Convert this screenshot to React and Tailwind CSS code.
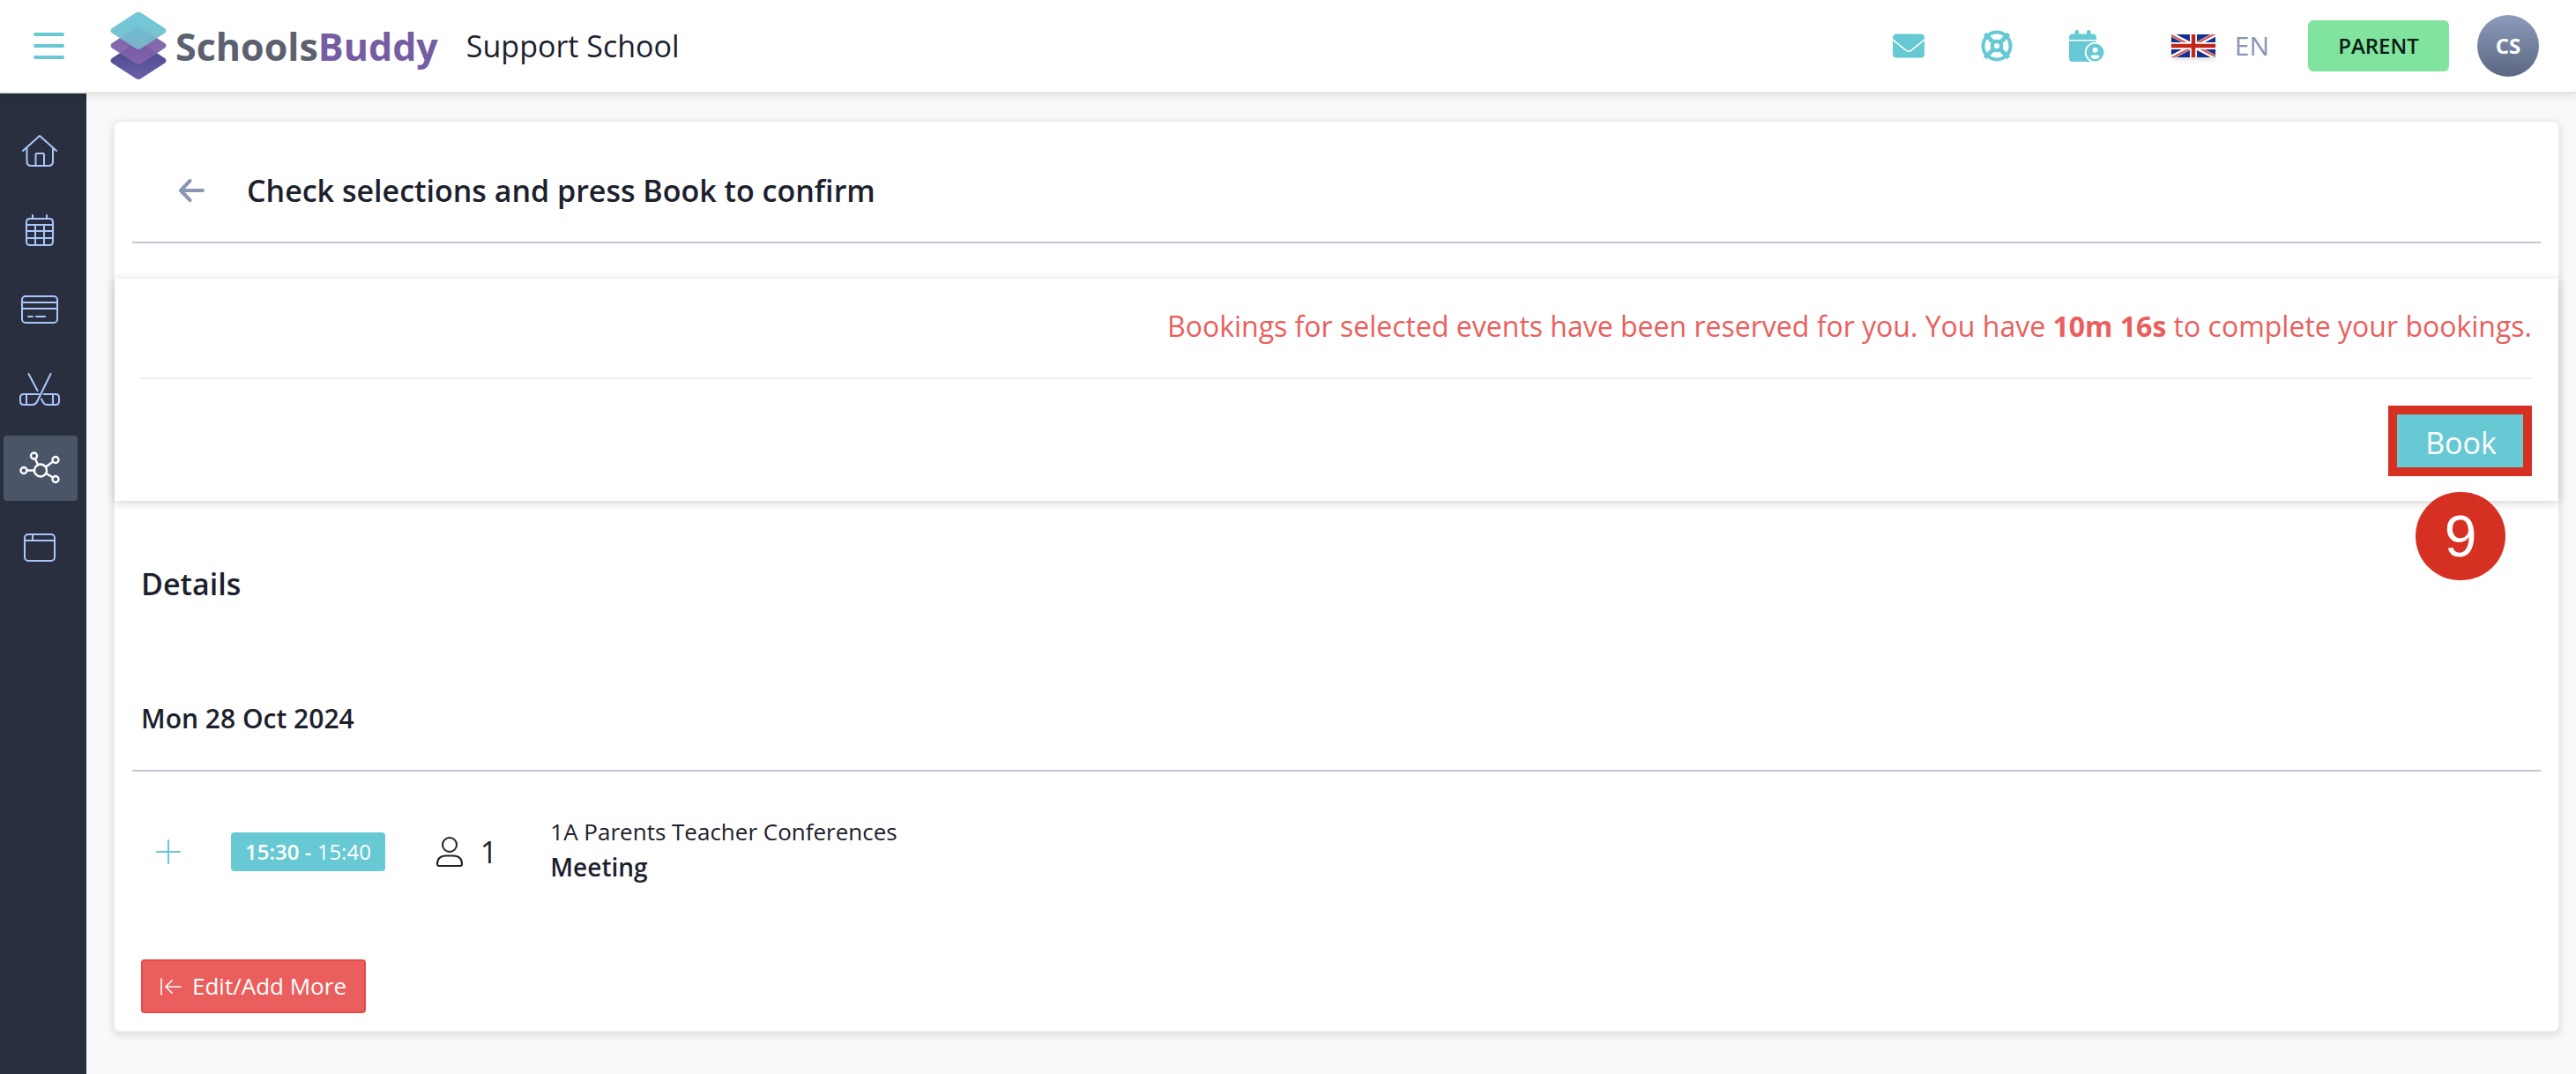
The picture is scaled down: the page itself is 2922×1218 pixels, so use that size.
import React from "react";

const rhombus = "M29 1.5Q32 -.5 35 1.5L62 19Q65 21.7 62 24.5L35 42Q32 44 29 42L2 24.5Q-1 21.7 2 19Z";

function LogoMark() {
  return (
    <svg width="64" height="78" viewBox="0 0 64 78" aria-hidden="true">
      <defs>
        <linearGradient id="lgTop" x1="0" y1="0" x2="0" y2="1">
          <stop offset="0.4" stopColor="#6bc3d3" />
          <stop offset="1" stopColor="#7fb6c6" />
        </linearGradient>
        <linearGradient id="lgMid" x1="0" y1="0" x2="0" y2="1">
          <stop offset="0.4" stopColor="#7759a2" />
          <stop offset="1" stopColor="#8668ad" />
        </linearGradient>
        <linearGradient id="lgLow" x1="0" y1="0" x2="0" y2="1">
          <stop offset="0.4" stopColor="#544e95" />
          <stop offset="1" stopColor="#6a62a8" />
        </linearGradient>
      </defs>
      <path d={rhombus} transform="translate(0 34)" fill="url(#lgLow)" />
      <path d={rhombus} transform="translate(0 17)" fill="url(#lgMid)" fillOpacity="0.92" />
      <path d={rhombus} fill="url(#lgTop)" fillOpacity="0.94" />
    </svg>
  );
}

function Line({ w, h, sw = 2, children }) {
  return (
    <svg width={w} height={h} viewBox={`0 0 ${w} ${h}`} fill="none" stroke="currentColor" strokeWidth={sw} strokeLinecap="round" strokeLinejoin="round" aria-hidden="true">
      {children}
    </svg>
  );
}

const nav = [
  { label: "Home", icon: (
    <Line w={40} h={36}><path d="M1 18L20 1L39 18M5.500 14.500V30Q5.500 35 10.500 35H30Q35 35 35 30V14.500M15.500 35V22.500Q15.500 21 17 21H23.500Q25 21 25 22.500V35" /></Line>
  ) },
  { label: "Calendar", icon: (
    <Line w={32} h={38}><path d="M5 6H27Q31 6 31 10V32Q31 36 27 36H5Q1 36 1 32V10Q1 6 5 6ZM8 2V6M24 2V6M1 13H31M1 20H31M1 28H31M11 13V36M21 13V36" /></Line>
  ) },
  { label: "Payments", icon: (
    <Line w={42} h={32}><rect x="1" y="1" width="40" height="30" rx="4" /><path d="M1 8H41M1 15H41M8 24H13M17 24H27" /></Line>
  ) },
  { label: "Activities", icon: (
    <Line w={46} h={37}><path d="M10.500 1L20.500 20M35.500 1L20 32.500Q18.300 36 15 36H5Q1 36 1 32V28Q1 24 5 24H22M8 24V36M27.500 24H41Q45 24 45 28V32Q45 36 41 36H31Q28.500 36 27 33.500L25 29.500M38 24V36" /></Line>
  ) },
  { label: "Events", active: true, icon: (
    <Line w={46} h={38} sw={2.4}><circle cx="24" cy="21.500" r="7" /><circle cx="5" cy="21.500" r="3.500" /><circle cx="16.500" cy="5" r="3.500" /><circle cx="41" cy="9.500" r="3.500" /><circle cx="41" cy="31.500" r="3.500" /><path d="M8.500 21.500H17M18 8.500L21 15M38 11.500L30 17.500M38 29.500L30.500 25" /></Line>
  ) },
  { label: "Pages", icon: (
    <Line w={36} h={32}><rect x="1" y="1" width="34" height="30" rx="4" /><path d="M1 8H35M10 1V8" /></Line>
  ) },
];

function MailIcon() {
  return (
    <svg width="36" height="28" viewBox="0 0 36 28" fill="currentColor" aria-hidden="true">
      <path d="M4.500 .5H31.500Q36 .5 36 5V6L20.500 18.500Q18 20.300 15.500 18.500L0 6V5Q0 .5 4.500 .5Z" />
      <path d="M0 8L14.500 19.700Q18 22.200 21.500 19.700L36 8V23Q36 27.500 31.500 27.500H4.500Q0 27.500 0 23Z" />
    </svg>
  );
}

function LifeRingIcon() {
  return (
    <svg width="36" height="36" viewBox="0 0 36 36" fill="none" stroke="currentColor" aria-hidden="true">
      <circle cx="18" cy="18" r="15.500" strokeWidth="4" />
      <circle cx="18" cy="18" r="5.200" strokeWidth="4.200" />
      <path d="M4.500 4.500L14 14M31.500 4.500L22 14M4.500 31.500L14 22M31.500 31.500L22 22" strokeWidth="5" />
    </svg>
  );
}

function CalendarUserIcon() {
  return (
    <svg width="40" height="36" viewBox="0 0 40 36" aria-hidden="true">
      <g fill="currentColor">
        <rect x="6.500" y="0" width="4.500" height="9" rx="2.200" />
        <rect x="20" y="0" width="4.500" height="9" rx="2.200" />
        <path d="M4 4.500H27Q31 4.500 31 8.500V11H0V8.500Q0 4.500 4 4.500Z" />
        <path d="M0 12.500H31V36H4Q0 36 0 32Z" />
      </g>
      <circle cx="29.500" cy="25.500" r="11.700" fill="#fff" />
      <circle cx="29.500" cy="25.500" r="9.900" fill="currentColor" />
      <circle cx="29.500" cy="22.800" r="3" fill="#fff" />
      <path d="M24.500 30.500Q24.500 28.500 27 28.500H32Q34.500 28.500 34.500 30.500Q33 33 29.500 33Q26 33 24.500 30.500Z" fill="#fff" />
    </svg>
  );
}

function Flag() {
  return (
    <svg width="50" height="26" viewBox="0 0 50 26" className="shadow-md" aria-hidden="true">
      <rect width="50" height="26" fill="#14308f" />
      <path d="M0 0L50 26M50 0L0 26" stroke="#fff" strokeWidth="5" />
      <path d="M0 1L23 13M50 25L27 13M50 -1L25 12M0 27L25 14" stroke="#d4554c" strokeWidth="2" />
      <path d="M25 0V26M0 13H50" stroke="#fff" strokeWidth="8" />
      <path d="M25 0V26M0 13H50" stroke="#c0281c" strokeWidth="4.500" />
    </svg>
  );
}

export default function App() {
  return (
    <div className="flex min-h-screen flex-col bg-[#f9f9f9] font-['Open_Sans',sans-serif] text-[#1c212d]">
      <header className="relative z-10 flex h-[106px] items-center justify-between border-b-2 border-[#e4e4e4] bg-white pr-[42px] pl-[38px] shadow-[0_2px_10px_rgba(0,0,0,0.12)]">
        <div className="flex items-center">
          <button aria-label="Menu" className="mr-[52px] flex w-[35px] flex-col gap-[9px]">
            <span className="h-1 rounded-full bg-[#66c9d3]" />
            <span className="h-1 rounded-full bg-[#66c9d3]" />
            <span className="h-1 rounded-full bg-[#66c9d3]" />
          </button>
          <a href="#home" className="flex items-center gap-[10px] text-[43px] leading-none font-bold text-[#5b616e]">
            <LogoMark />
            <span>Schools<span className="text-[#765da3]">Buddy</span></span>
          </a>
          <span className="ml-8 text-[34px]">Support School</span>
        </div>
        <div className="flex items-center text-[#66c9d3]">
          <button aria-label="Messages" className="mr-16"><MailIcon /></button>
          <button aria-label="Help" className="mr-16"><LifeRingIcon /></button>
          <button aria-label="My calendar" className="mr-[76px]"><CalendarUserIcon /></button>
          <button className="mr-11 flex items-center gap-[22px] text-3xl text-[#8a95b3]">
            <Flag />
            <span>EN</span>
          </button>
          <button className="mr-8 h-[58px] w-40 rounded-md bg-[#80e49e] text-2xl font-semibold text-[#0e1b16]">PARENT</button>
          <button className="h-[70px] w-[70px] rounded-full bg-linear-to-b from-[#8c9cbb] to-[#5c6781] text-2xl font-bold text-white">CS</button>
        </div>
      </header>

      <div className="flex flex-1">
        <nav className="flex w-[98px] shrink-0 flex-col gap-4 bg-[#2a2f3f] pt-7 pr-[10px] pl-1">
          {nav.map((n) => (
            <a key={n.label} href={"#" + n.label.toLowerCase()} aria-label={n.label}
              className={n.active ? "flex h-[74px] items-center justify-center rounded bg-[#4a5568] pr-0.5 text-white" : "flex h-[74px] items-center justify-center rounded pr-0.5 text-[#a9c6fb]"}>
              {n.icon}
            </a>
          ))}
        </nav>

        <main className="min-w-0 flex-1 pt-[30px] pr-[18px] pb-[47px] pl-[30px]">
          <div className="rounded-lg border-2 border-[#ececf1] bg-white pb-5 shadow-[0_3px_10px_rgba(0,0,0,0.12)]">
            <div className="mx-5 flex h-[138px] items-center gap-12 border-b-2 border-[#c2c5d6] pt-5 pl-[52px]">
              <button aria-label="Back" className="text-[#8a95b3]">
                <Line w={30} h={28} sw={4}><path d="M28 14H3M13.500 3L3 14L13.500 25" /></Line>
              </button>
              <h1 className="text-[34px] font-semibold">Check selections and press Book to confirm</h1>
            </div>

            <section className="mt-10 px-[30px] pt-[30px] pb-7 shadow-[0_2px_10px_rgba(0,0,0,0.18)]">
              <p className="border-b-2 border-[#ececf1] pb-[34px] text-right text-[32px] leading-[48px] text-[#ea5f5d]">
                Bookings for selected events have been reserved for you. You have <b>10m 16s</b> to complete your bookings.
              </p>
              <div className="mt-[30px] flex justify-end">
                <div className="relative">
                  <button className="h-20 w-[163px] border-[10px] border-[#d63023] bg-[#66c9d3] pt-0.5 pl-0.5 text-[34px] leading-[60px] text-white">Book</button>
                  <span className="absolute top-[98px] left-[31px] flex h-[100px] w-[102px] items-center justify-center rounded-full bg-[#d63023] font-['Liberation_Sans',sans-serif] text-[66px] leading-none text-white">9</span>
                </div>
              </div>
            </section>

            <h2 className="mt-[70px] px-[30px] text-[34px] leading-[48px] font-semibold">Details</h2>
            <h3 className="mx-5 mt-[109px] border-b-2 border-[#c2c5d6] px-[10px] pb-[38px] text-3xl leading-10 font-semibold">Mon 28 Oct 2024</h3>

            <div className="mt-12 flex items-center pl-[46px]">
              <div className="flex items-center pt-1.5">
                <button aria-label="Expand" className="mr-[56px] text-[#66c9d3]">
                  <Line w={30} h={30}><path d="M15 2V28M2 15H28" /></Line>
                </button>
                <span className="mr-[58px] rounded bg-[#66c9d3] px-4 text-2xl leading-[44px] text-white"><span className="font-semibold">15:30 -</span> 15:40</span>
                <Line w={30} h={34}>
                  <circle cx="15" cy="9" r="8" />
                  <path d="M3 33Q1 33 1 31Q1 21.500 11 21.500H19Q29 21.500 29 31Q29 33 27 33Z" />
                </Line>
                <span className="ml-5 text-[34px] leading-[44px]">1</span>
              </div>
              <div className="ml-[60px] leading-10">
                <div className="text-[26px]">1A Parents Teacher Conferences</div>
                <div className="text-[28px] font-semibold">Meeting</div>
              </div>
            </div>

            <button className="mt-[85px] ml-[30px] flex h-[61px] items-center gap-3 rounded border-2 border-[#e84a46] bg-[#ea5f5d] px-5 text-[26px] text-white">
              <Line w={24} h={20} sw={1.6}><path d="M1 1V19M23 10H6M13 3L6 10L13 17" /></Line>
              <span>Edit/Add More</span>
            </button>
          </div>
        </main>
      </div>
    </div>
  );
}
